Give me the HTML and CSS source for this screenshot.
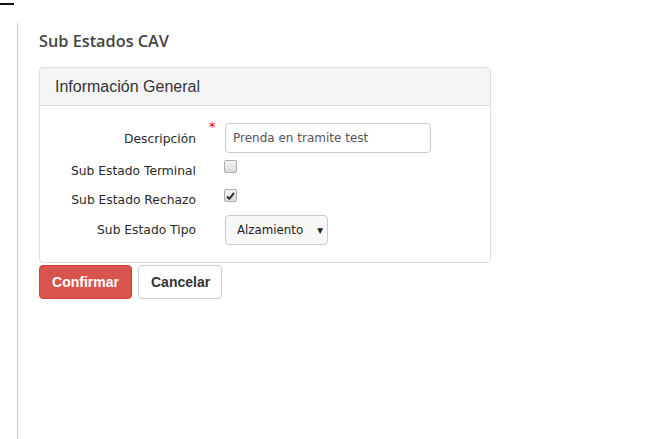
FILE: index.html
```html
<!DOCTYPE html>
<html lang="es">
<head>
<meta charset="utf-8">
<title>Sub Estados CAV</title>
<link rel="stylesheet" href="styles.css">
</head>
<body>
<div class="topbar"></div>
<div class="main">
  <h1 class="title">Sub Estados CAV</h1>
  <div class="panel">
    <div class="panel-heading">Información General</div>
    <div class="panel-body">
      <div class="row row-input">
        <label class="lbl">Descripción</label>
        <span class="req">*</span>
        <input class="text-input" type="text" value="Prenda en tramite test">
      </div>
      <div class="row row-check">
        <label class="lbl">Sub Estado Terminal</label>
        <span class="req"></span>
        <span class="chk"></span>
      </div>
      <div class="row row-check">
        <label class="lbl">Sub Estado Rechazo</label>
        <span class="req"></span>
        <span class="chk checked"><svg width="9" height="8" viewBox="0 0 9 8"><path d="M1 4.5 L3.3 6.8 L8 1" fill="none" stroke="#333" stroke-width="2"/></svg></span>
      </div>
      <div class="row row-select">
        <label class="lbl">Sub Estado Tipo</label>
        <span class="req"></span>
        <div class="select"><span>Alzamiento</span><span class="caret">▼</span></div>
      </div>
    </div>
  </div>
  <div class="actions">
    <button class="btn btn-danger">Confirmar</button>
    <button class="btn btn-default">Cancelar</button>
  </div>
</div>
</body>
</html>
```
FILE: styles.css
```css
html, body {
  margin: 0;
  padding: 0;
  background: #fff;
  font-family: "DejaVu Sans", sans-serif;
  color: #333;
}
.topbar {
  width: 14px;
  height: 2px;
  margin-top: 3px;
  background: #111;
}
.main {
  margin-top: 18px;
  margin-left: 17px;
  border-left: 1px solid #ccc;
  padding-left: 21px;
  height: 416px;
  box-sizing: border-box;
  padding-top: 7px;
}
.title {
  margin: 0 0 14px 0;
  font-family: "Open Sans", "DejaVu Sans", sans-serif;
  font-size: 16.3px;
  font-weight: 650;
  color: #444;
  line-height: 23px;
}
.panel {
  width: 452px;
  border: 1px solid #ddd;
  border-radius: 4px;
  box-sizing: border-box;
}
.panel-heading {
  background: #f5f5f5;
  border-bottom: 1px solid #ddd;
  border-radius: 3px 3px 0 0;
  height: 37px;
  padding-left: 15px;
  font-family: "Liberation Sans", Arial, sans-serif;
  font-size: 16px;
  line-height: 37px;
  color: #333;
}
.panel-body {
  padding: 17px 0 17px 0;
}
.row {
  display: grid;
  grid-template-columns: 156px 29px auto;
  align-items: center;
}
.lbl {
  text-align: right;
  font-size: 12.3px;
  color: #2a2a2a;
}
.row-input .lbl { padding-top: 2px; }
.req {
  color: #e00;
  font-size: 13px;
  align-self: start;
  padding-left: 13px;
  line-height: 8px;
}
.row-input { height: 30px; }
.row-check { height: 29px; }
.row-check .lbl { padding-top: 6px; }
.row-select { height: 30px; margin-top: 4px; }
.text-input {
  width: 206px;
  height: 30px;
  box-sizing: border-box;
  border: 1px solid #ccc;
  border-radius: 4px;
  padding: 0 7px;
  font-family: "DejaVu Sans", sans-serif;
  font-size: 12px;
  color: #555;
  outline: none;
}
.chk {
  width: 11px;
  height: 11px;
  border: 1px solid #aaa;
  border-radius: 2px;
  background: linear-gradient(#f4f4f4, #dcdcdc);
  display: flex;
  align-items: center;
  justify-content: center;
  margin-top: -2px;
  margin-left: -1px;
}
.select {
  width: 103px;
  height: 30px;
  box-sizing: border-box;
  border: 1px solid #ccc;
  border-radius: 4px;
  background: #f8f8f8;
  display: flex;
  align-items: center;
  padding-left: 11px;
  font-size: 11.8px;
  color: #222;
}
.caret {
  font-size: 7.5px;
  margin-left: 14px;
}
.actions {
  display: flex;
  gap: 6px;
  margin-top: 2px;
}
.btn {
  height: 34px;
  border-radius: 4px;
  font-family: "Liberation Sans", Arial, sans-serif;
  font-size: 14px;
  font-weight: bold;
  padding: 0 12px;
  cursor: pointer;
}
.btn-danger {
  width: 93px;
  background: #d9534f;
  border: 1px solid #d43f3a;
  color: #fff;
}
.btn-default {
  width: 84px;
  background: #fff;
  border: 1px solid #ccc;
  color: #333;
}
```
